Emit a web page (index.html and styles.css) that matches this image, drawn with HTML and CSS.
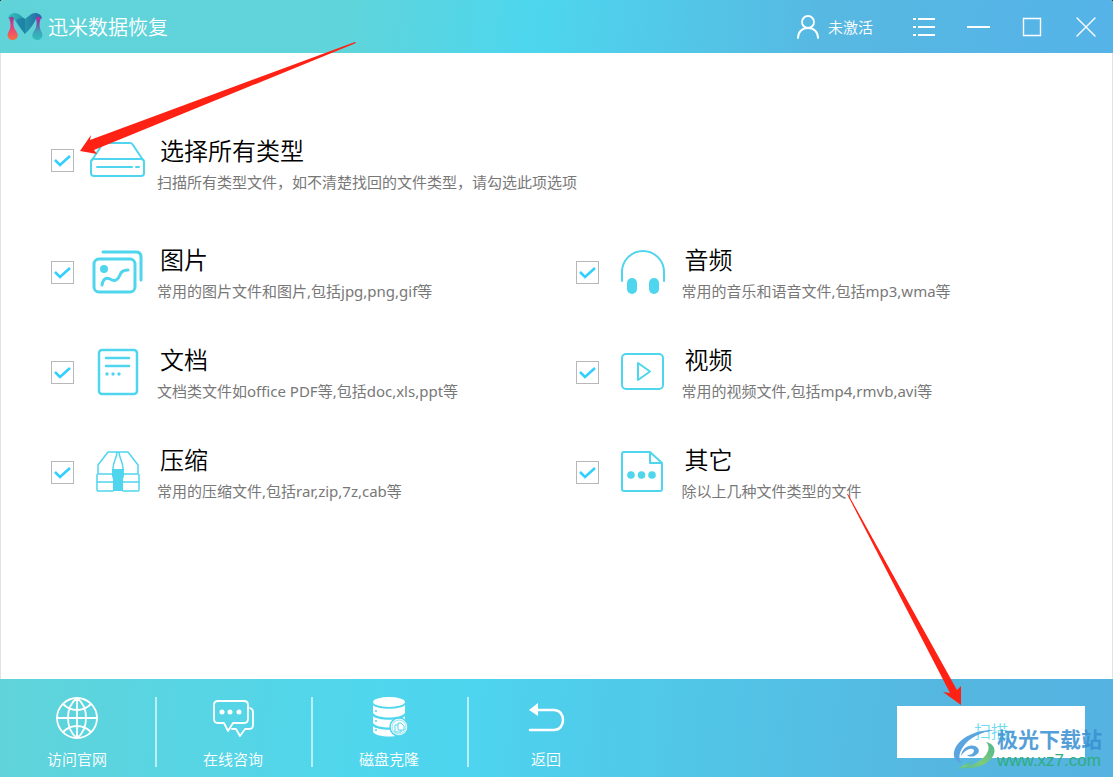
FILE: index.html
```html
<!DOCTYPE html>
<html lang="zh-CN">
<head>
<meta charset="utf-8">
<title>迅米数据恢复</title>
<link rel="stylesheet" href="styles.css">
</head>
<body>
<div class="app">
  <header class="titlebar">
    <svg class="logo" width="36" height="30" viewBox="0 0 36 30" aria-hidden="true">
      <defs>
        <linearGradient id="lg-left" x1="0" y1="0" x2="0" y2="1"><stop offset="0" stop-color="#8d3f9a"/><stop offset=".35" stop-color="#e0398a"/><stop offset="1" stop-color="#f8703f"/></linearGradient>
        <linearGradient id="lg-right" x1="0" y1="0" x2="0" y2="1"><stop offset="0" stop-color="#b5309a"/><stop offset=".3" stop-color="#7a4aa5"/><stop offset=".6" stop-color="#3f9fb8"/><stop offset="1" stop-color="#2fc0bd"/></linearGradient>
        <linearGradient id="lg-top" x1="0" y1="0" x2="1" y2="0"><stop offset="0" stop-color="#38bfc0"/><stop offset=".5" stop-color="#2199a9"/><stop offset="1" stop-color="#2a60ad"/></linearGradient>
      </defs>
      <path fill="url(#lg-top)" d="M1 7C1 1 9-1 13 3l5 4 5-4c4-4 12-2 12 4-2-2-4-2-6 0-2 5-6 10-11 15C14 17 10 12 7 7 5 5 3 5 1 7z"/>
      <path fill="#1f6fa5" opacity=".6" d="M18 7v15C14 17 11 12 9 8c3-2 6-3 9-1z"/>
      <path fill="url(#lg-left)" d="M2 6c2-2 4-1 5 0-1 5-1 9 2 13 3 4 2 9-3 9s-7-5-4-9C4 15 4 11 2 6z"/>
      <path fill="url(#lg-right)" d="M34 6c-2-2-4-1-5 0 1 5 1 9-2 13-3 4-2 9 3 9s7-5 4-9c-2-4-2-8 0-13z"/>
    </svg>
    <h1 class="app-name">迅米数据恢复</h1>
    <button class="account" type="button">
      <svg width="22" height="24" viewBox="0 0 22 24" class="line" aria-hidden="true"><circle cx="11" cy="7" r="6"/><path d="M1 23c0-6 4-10 10-10s10 4 10 10"/></svg>
      <span>未激活</span>
    </button>
    <button class="win-btn" type="button" aria-label="菜单"><svg width="24" height="24" viewBox="0 0 24 24" class="line menu" aria-hidden="true"><path d="M1 4h3M1 12h3M1 20h3M6 4h17M6 12h17M6 20h17"/></svg></button>
    <button class="win-btn" type="button" aria-label="最小化"><svg width="24" height="24" viewBox="0 0 24 24" class="line menu" aria-hidden="true"><path d="M1 12h23"/></svg></button>
    <button class="win-btn" type="button" aria-label="最大化"><svg width="24" height="24" viewBox="0 0 24 24" class="line thin" aria-hidden="true"><path d="M3.500 3.500h17v17h-17z"/></svg></button>
    <button class="win-btn" type="button" aria-label="关闭"><svg width="24" height="24" viewBox="0 0 24 24" class="line thin" aria-hidden="true"><path d="M3 3l18 18M21 3L3 21"/></svg></button>
  </header>

  <main class="content">
    <label class="type type-all">
      <span class="lead">
        <input class="check" type="checkbox" checked>
        <svg class="icon" width="56" height="56" viewBox="0 0 56 56" aria-hidden="true"><rect x="1" y="27" width="53" height="17" rx="3"/><path d="M2 28l10-15q1-2 3-2h25q2 0 3 2l10 15M7 35h35M46 35h3"/></svg>
      </span>
      <span class="text"><span class="name">选择所有类型</span><span class="desc">扫描所有类型文件，如不清楚找回的文件类型，请勾选此项选项</span></span>
    </label>

    <div class="types">
      <label class="type">
        <span class="lead">
          <input class="check" type="checkbox" checked>
          <svg class="icon bold" width="56" height="56" viewBox="0 0 56 56" aria-hidden="true"><rect x="4" y="15" width="41" height="33" rx="5"/><path d="M13 8h33q5 0 5 5v23"/><path d="M12 41c1-6 4-8 8-6 5 3 8 1 10-4 1-4 4-5 8-5"/><circle class="solid" cx="14" cy="25" r="4"/></svg>
        </span>
        <span class="text"><span class="name">图片</span><span class="desc">常用的图片文件和图片,包括jpg,png,gif等</span></span>
      </label>
      <label class="type">
        <span class="lead">
          <input class="check" type="checkbox" checked>
          <svg class="icon" width="56" height="56" viewBox="0 0 56 56" aria-hidden="true"><path d="M7 37v-9a21 21 0 0 1 42 0v9"/><rect class="solid" x="12" y="34" width="10" height="16" rx="5"/><rect class="solid" x="34" y="34" width="10" height="16" rx="5"/></svg>
        </span>
        <span class="text"><span class="name">音频</span><span class="desc">常用的音乐和语音文件,包括mp3,wma等</span></span>
      </label>
      <label class="type">
        <span class="lead">
          <input class="check" type="checkbox" checked>
          <svg class="icon" width="56" height="56" viewBox="0 0 56 56" aria-hidden="true"><g class="mid"><rect x="9" y="6" width="38" height="44" rx="3"/><path d="M16 14h23M16 22h23"/></g><circle class="solid" cx="17" cy="30" r="1.700"/><circle class="solid" cx="23" cy="30" r="1.700"/><circle class="solid" cx="29" cy="30" r="1.700"/></svg>
        </span>
        <span class="text"><span class="name">文档</span><span class="desc">文档类文件如office PDF等,包括doc,xls,ppt等</span></span>
      </label>
      <label class="type">
        <span class="lead">
          <input class="check" type="checkbox" checked>
          <svg class="icon" width="56" height="56" viewBox="0 0 56 56" aria-hidden="true"><rect x="7" y="10" width="41" height="35" rx="4"/><path d="M23 19v17l12-8.500z"/></svg>
        </span>
        <span class="text"><span class="name">视频</span><span class="desc">常用的视频文件,包括mp4,rmvb,avi等</span></span>
      </label>
      <label class="type">
        <span class="lead">
          <input class="check" type="checkbox" checked>
          <svg class="icon fine" width="56" height="56" viewBox="0 0 56 56" aria-hidden="true"><path d="M8 29v-8L18 8h20l10 13v8M27 8c0 6-4 9-4 17M29 8c0 6 4 9 4 17"/><path d="M23 30H8q-1 0-1 1v15q0 1 1 1h15M33 30h15q1 0 1 1v15q0 1-1 1H33M7 38h16M33 38h16"/><path class="solid" d="M22 25h12v7l-1 3v12H23V35l-1-3z"/></svg>
        </span>
        <span class="text"><span class="name">压缩</span><span class="desc">常用的压缩文件,包括rar,zip,7z,cab等</span></span>
      </label>
      <label class="type">
        <span class="lead">
          <input class="check" type="checkbox" checked>
          <svg class="icon" width="56" height="56" viewBox="0 0 56 56" aria-hidden="true"><path d="M35 8H9q-2 0-2 2v35q0 2 2 2h36q2 0 2-2V19zM35 8v11h12"/><circle class="solid" cx="16" cy="31" r="3.800"/><circle class="solid" cx="26.500" cy="31" r="3.800"/><circle class="solid" cx="37" cy="31" r="3.800"/></svg>
        </span>
        <span class="text"><span class="name">其它</span><span class="desc">除以上几种文件类型的文件</span></span>
      </label>
    </div>
  </main>

  <footer class="toolbar">
    <nav class="actions">
      <a class="action" href="#site">
        <svg width="44" height="44" viewBox="0 0 44 44" class="line" aria-hidden="true"><circle cx="22" cy="22" r="20"/><path d="M22 2v40M2 22h40M22 2c-12 9-12 31 0 40M22 2c12 9 12 31 0 40M8 8c8 8 20 8 28 0M8 36c8-8 20-8 28 0"/></svg>
        <span>访问官网</span>
      </a>
      <a class="action" href="#chat">
        <svg width="44" height="44" viewBox="0 0 44 44" class="line" aria-hidden="true"><path d="M7 5h26q4 0 4 4v14q0 4-4 4H22l-5 8-4-8H7q-4 0-4-4V9q0-4 4-4z"/><path d="M39 12q3 1 3 4v13q0 4-4 4h-4l-5 7-4-7h-4"/><circle class="white" cx="11" cy="16" r="2.500"/><circle class="white" cx="19" cy="16" r="2.500"/><circle class="white" cx="28" cy="16" r="2.500"/></svg>
        <span>在线咨询</span>
      </a>
      <a class="action" href="#clone">
        <svg width="44" height="44" viewBox="0 0 44 44" aria-hidden="true"><g fill="#fff"><ellipse cx="22" cy="6" rx="16" ry="5"/><path d="M6 9c4 5 28 5 32 0v8c-4 6-28 6-32 0zM6 20c4 5 28 5 32 0v7c-4 6-28 6-32 0zM6 30c4 5 28 5 32 0v6c-4 6-28 6-32 0z"/></g><g fill="#50d5ed"><circle cx="9" cy="15" r="1"/><circle cx="9" cy="25" r="1"/><circle cx="9" cy="34" r="1"/></g><circle cx="32" cy="31" r="9" fill="#fff" stroke="#50d5ed" stroke-width="1.500"/><circle cx="32" cy="31" r="7" fill="none" stroke="#8ee3f2"/><path d="M31 27h3l3 3v4h-6zM31 29h-3v7h6v-2" fill="none" stroke="#50d5ed"/></svg>
        <span>磁盘克隆</span>
      </a>
      <a class="action" href="#back">
        <svg width="44" height="44" viewBox="0 0 44 44" class="line heavy" aria-hidden="true"><path d="M10 14h20c12 0 12 20 0 20H6"/><path class="white-fill" d="M5 14l9-7v13z"/></svg>
        <span>返回</span>
      </a>
    </nav>
    <button class="scan" type="button">扫描</button>
  </footer>

  <svg class="arrow arrow-check" width="280" height="118" viewBox="0 0 280 118" aria-hidden="true"><path d="M276 1L11 99 12 94 1 110l17 3-3-4L277 2z"/></svg>
  <svg class="arrow arrow-scan" width="118" height="214" viewBox="0 0 118 214" aria-hidden="true"><path d="M0 0L103 199l-7-1 18 13V192l-4 4L1 0z"/></svg>

  <div class="watermark">
    <svg width="44" height="44" viewBox="0 0 44 44" aria-hidden="true">
      <defs><linearGradient id="wm-green" x1="1" y1="0" x2="0" y2="1"><stop offset="0" stop-color="#52b68d"/><stop offset=".6" stop-color="#7dcc7b"/><stop offset="1" stop-color="#54bb9c"/></linearGradient></defs>
      <path fill="#5aa5e0" d="M42 3C24 2 4 11 1 25c-1 7 3 11 8 11-4-5-3-10 1-16C16 11 27 5 42 3z"/>
      <path fill="#5aa5e0" d="M8 29c1-8 8-12 14-10 5 2 5 7 1 9-3 2-7 2-9 0 4 0 6-1 7-4 0-4-8-3-13 5z"/>
      <path fill="url(#wm-green)" d="M33 15c10 2 11 11 4 18-7 7-18 9-29 8 10-2 19-6 24-12 4-5 5-10 1-14z"/>
      <path fill="url(#wm-green)" d="M5 42c4-4 9-6 15-7-4 4-9 6-15 7z"/>
    </svg>
    <div class="wm-text"><span class="wm-name">极光下载站</span><span class="wm-url">www.xz7.com</span></div>
  </div>
</div>
</body>
</html>
```
FILE: styles.css
```css
* { box-sizing: border-box; }

body {
  margin: 0;
  background: #111;
  font-family: "Noto Sans", "Noto Sans CJK SC", sans-serif;
  font-size: 15px;
  line-height: 20px;
  color: #787878;
}

button {
  border: 0;
  padding: 0;
  background: none;
  font: inherit;
  color: inherit;
  cursor: pointer;
}

svg { display: block; flex: none; }

.app {
  position: relative;
  display: flex;
  flex-direction: column;
  min-height: 100vh;
  overflow: hidden;
  border-radius: 3px 3px 0 0;
  background: #fff;
}

.line {
  fill: none;
  stroke: #fff;
  stroke-width: 1.8;
  stroke-linecap: round;
  stroke-linejoin: round;
}
.menu { stroke-width: 2; stroke-linecap: butt; }
.thin { stroke-width: 1.4; stroke-linejoin: miter; }
.heavy { stroke-width: 2.5; }
.white { fill: #fff; stroke: none; }
.white-fill { fill: #fff; stroke: none; }

.titlebar {
  display: flex;
  align-items: center;
  height: 53px;
  padding-left: 7px;
  background: linear-gradient(95deg, #60d3d9 0%, #5fd4da 31%, #4dd6ee 48%, #57b8e1 74%, #55b3e8 100%);
  color: #fff;
}

.app-name {
  flex: 1;
  margin: 0;
  padding: 2px 0 0 5px;
  font-size: 20px;
  line-height: 28px;
  font-weight: 350;
}

.account {
  display: flex;
  align-items: center;
  gap: 9px;
  margin-right: 24px;
  font-weight: 350;
}

.win-btn {
  display: grid;
  place-items: center;
  width: 54px;
  height: 53px;
}

.content {
  flex: 1;
  padding: 82px 12px 40px 50px;
  border: solid #dfe3e5;
  border-width: 0 1px;
}

.types {
  display: grid;
  grid-template-columns: 1fr 1fr;
  row-gap: 43px;
  margin-top: 52px;
}

.type {
  display: flex;
  gap: 11px;
  align-items: flex-start;
}

.lead {
  display: flex;
  align-items: center;
  gap: 16px;
  height: 56px;
}
.type-all .lead { height: 50px; }

.check {
  appearance: none;
  width: 23px;
  height: 23px;
  margin: 0;
  border: 1px solid #b8b8b8;
  background: #fff;
}
.check:checked {
  background: #fff url("data:image/svg+xml,%3Csvg xmlns='http://www.w3.org/2000/svg' viewBox='0 0 21 21'%3E%3Cpath d='M3 10l5 5 10-9' fill='none' stroke='%2330cfff' stroke-width='2.500'/%3E%3C/svg%3E") center / 100%;
}

.icon {
  fill: none;
  stroke: #4fd5ed;
  stroke-width: 2;
  stroke-linejoin: round;
  stroke-linecap: round;
}
.bold { stroke-width: 3; }
.mid { stroke-width: 2.5; }
.fine { stroke-width: 1.5; }
.solid { fill: #4fd5ed; stroke: none; }

.text {
  display: flex;
  flex-direction: column;
  gap: 5px;
}
.name {
  padding-left: 3px;
  font-size: 24px;
  line-height: 32px;
  color: #000;
  font-weight: 350;
}

.toolbar {
  display: flex;
  align-items: flex-start;
  justify-content: space-between;
  height: 98px;
  padding-right: 28px;
  background: linear-gradient(95deg, #60d3d9 0%, #50d6ec 32%, #4dd4ee 42%, #55b8e0 82%, #55b2e1 100%);
  color: #fff;
}

.actions { display: flex; padding: 18px 0 0 1px; }

.action {
  display: flex;
  flex-direction: column;
  align-items: center;
  gap: 9px;
  width: 156px;
  height: 70px;
  padding-right: 2px;
  color: #fff;
  font-weight: 350;
  text-decoration: none;
}
.action:not(:last-child) { border-right: 2px solid #b9f0f8; }
.action svg { margin-top: -1px; }

.scan {
  width: 188px;
  height: 52px;
  margin-top: 27px;
  background: #fff;
  color: #6edcf0;
  font-size: 17px;
  font-weight: 350;
}

.arrow { position: absolute; fill: #ff2113; pointer-events: none; }
.arrow-check { left: 79px; top: 41px; }
.arrow-scan { right: 148px; bottom: 69px; }

.watermark {
  position: absolute;
  right: 11px;
  bottom: 6px;
  display: flex;
  align-items: center;
  pointer-events: none;
}
.wm-text { display: flex; flex-direction: column; }
.wm-name {
  font-size: 21px;
  line-height: 24px;
  font-weight: 700;
  color: #388fd2;
  opacity: 0.85;
}
.wm-url {
  font-family: "Liberation Sans", sans-serif;
  font-size: 17px;
  line-height: 20px;
  color: #2fad7d;
}
```
